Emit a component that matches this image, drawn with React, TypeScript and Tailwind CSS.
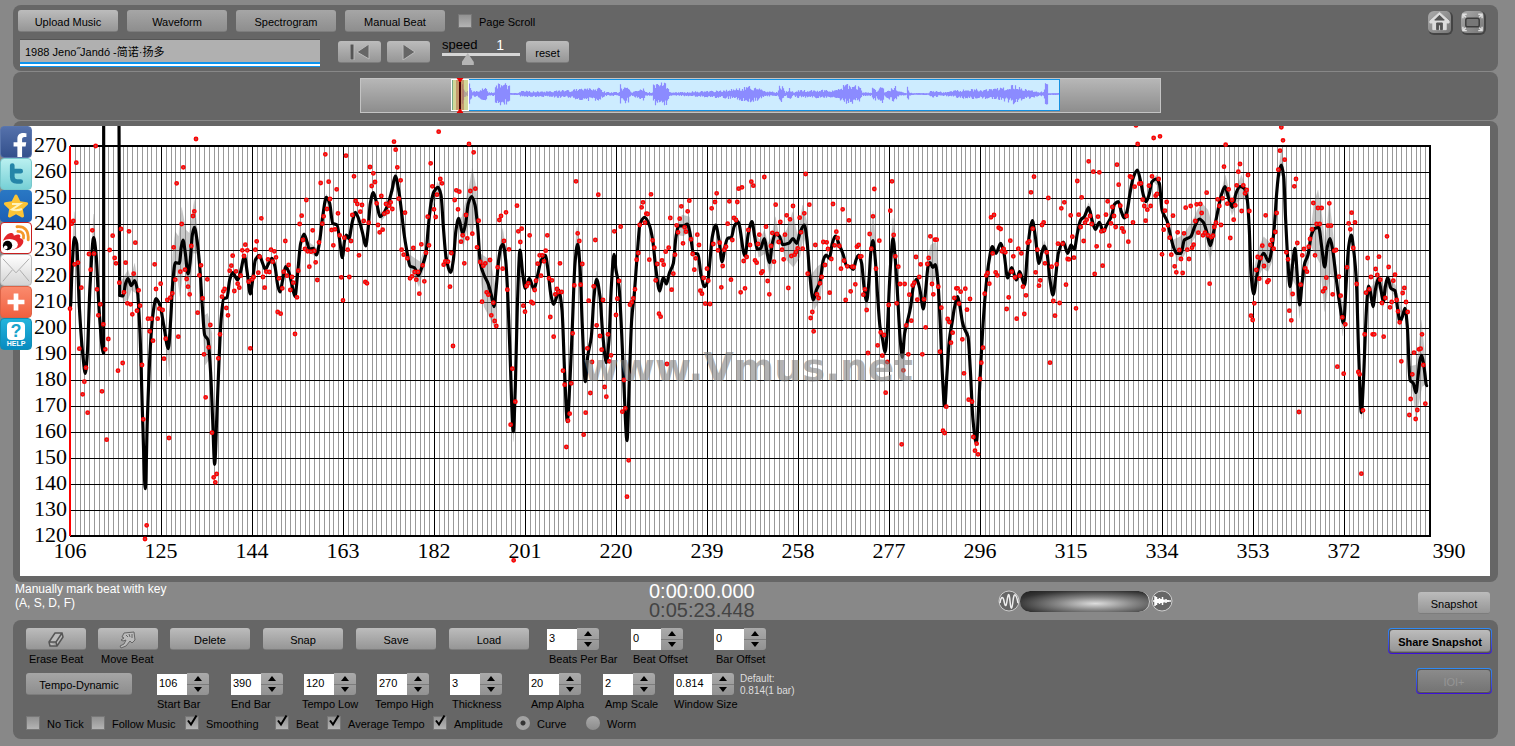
import type { ReactNode } from 'react'
import { FaFacebookF, FaStar } from 'react-icons/fa'
import { clsx } from 'clsx'

type Point = [number, number]

interface Stretch {
  offset: number
  curve: string
  beats: string
}

// Tempo data, stored in thirds of a chart pixel, one stretch per screenful of bars
const STRETCHES: Stretch[] = [
  {
    offset: 120,
    curve:
      '179,526 189,528 197,490 204,476 214,497 224,482 232,510 240,640 248,900 256,1106 262,900 270,700 278,590 288,536 300,556 312,620 325,686 332,600 338,490 346,428 358,430 364,380 369,360 376,400 384,462 390,430 397,345 403,322 411,360 420,450 427,560 434,645 444,660 452,760 458,900 464,1033 470,900 478,700 484,590 491,536 501,533 509,480 518,458 533,480 543,450 553,408 562,460 571,522 578,480 586,420 598,406 608,430 616,448 626,430 636,415 645,440 653,495 660,516 668,480 677,440 686,455 695,490 705,530 712,470 722,370 732,342 741,365 748,388 760,385 769,405 778,370 788,290 799,232 809,250 818,310 831,315 839,360 847,413 854,360 859,345 867,356 876,310 886,277 897,300 908,340 917,378 924,330 931,250 940,218 950,250 960,290 972,278 985,250 996,210 1006,168 1016,210',
    beats:
      '30,566 35,311 40,303 49,128 44,433 54,428 64,503 58,686 78,743 73,785 68,823 83,878 92,449 87,402 102,401 97,331 107,78 111,508 121,553 115,586 130,613 136,688 145,657 126,814 140,959 149,390 158,347 164,414 168,430 183,327 207,334 226,368 197,428 221,461 178,488 192,517 236,511 202,550 212,553 217,583 231,572 240,557 188,729 174,752 246,735 250,898 255,1257 260,1216 264,596 274,596 269,634 279,662 284,433 302,491 288,507 298,566 308,570 293,596 317,656 312,716 327,954 322,540 331,533 337,520 341,382 346,479 350,190 355,650 361,455 365,312 370,142 375,449 380,477 384,500 389,523 394,378 399,288 403,274 408,57 413,578 418,466 423,436 428,535 432,703 437,832 442,478 446,682 451,615 456,938 461,1072 466,1087 470,1062 475,715 480,643 486,530 490,514 494,507 499,564 504,586 509,452 514,437 518,407 523,513 528,454 533,491 538,503 542,467 547,391 552,408 556,374 562,391 566,485 571,685 576,478 581,471 586,389 590,364 595,458 599,410 604,295 609,471 614,503 619,455 624,418 628,456 633,389 638,425 643,394 648,412 653,576 657,475 662,581 667,505 671,455 676,363 681,467 686,435 691,510 696,471 700,488 705,642 711,532 715,452 719,312 725,287 729,360 735,387 739,240 743,394 748,440 753,395 758,331 763,393 767,427 772,480 777,367 782,189 787,311 791,289 796,103 801,267 806,185 810,237 815,330 820,376 825,328 830,208 834,280 839,346 844,472 849,541 853,353 858,107 863,389 868,471 873,363 877,285 882,169 887,243 892,252 897,406 901,275 906,255 911,303 916,486 921,490 926,308 930,141 935,198 940,160 945,186 950,250 954,315 959,337 964,228 968,329 973,281 978,252 983,276 987,257 992,247 997,267 1002,65 1007,89 1012,142 1016,236',
  },
  {
    offset: 1140,
    curve:
      '4,270 12,340 20,390 30,438 44,444 55,466 66,440 78,400 85,320 93,250 102,215 114,202 123,225 130,320 138,410 152,457 160,420 168,330 176,295 188,340 197,310 205,250 215,230 225,255 233,320 241,430 252,465 264,490 274,525 282,560 289,500 296,420 303,380 309,372 317,420 323,520 330,700 340,935 346,800 352,560 360,390 368,460 376,505 388,475 402,508 412,470 424,420 436,406 444,450 452,520 461,553 470,530 476,510 486,570 494,760 502,905 510,780 517,620 525,430 533,372 540,440 547,620 556,785 563,710 574,650 582,530 590,478 600,530 608,640 619,728 627,660 634,500 642,403 648,450 657,500 665,640 672,800 681,962 688,780 695,600 703,520 712,400 720,312 734,292 748,315 758,360 768,450 779,513 790,472 799,492 808,460 820,430 828,350 836,318 850,318 862,312 872,350 880,400 894,402 903,465 914,500 924,480 930,420 937,350 947,315 957,360 966,425 976,375 983,355 994,352 1003,318 1014,305',
    beats:
      '2,181 15,278 5,389 11,404 22,415 30,475 36,469 40,384 44,456 49,479 54,456 58,521 64,373 68,436 73,484 78,398 83,290 87,376 92,130 97,199 102,268 107,291 111,224 116,35 121,177 126,190 131,434 136,424 144,425 150,500 154,399 159,678 164,240 169,211 174,268 178,215 183,365 188,346 193,430 198,285 202,355 207,72 211,213 217,341 221,97 226,206 231,382 236,302 241,426 246,545 250,437 256,430 260,517 265,524 270,420 274,586 280,548 284,603 289,618 293,442 298,300 303,288 308,446 312,363 318,277 322,509 327,388 332,914 337,746 341,1321 346,845 351,257 355,334 361,366 365,326 370,557 375,575 380,498 385,490 389,346 394,546 399,550 404,510 408,482 413,431 419,406 423,467 427,406 432,424 437,392 442,346 447,475 451,591 456,481 461,650 466,523 471,507 475,516 480,430 485,516 489,752 494,794 499,981 504,902 509,881 514,790 518,640 523,496 528,184 533,340 538,363 542,494 547,432 551,944 557,878 562,685 566,542 571,819 576,726 581,499 586,360 590,616 595,224 600,648 605,689 609,540 614,801 619,830 624,643 628,724 633,706 643,334 648,585 652,536 657,483 662,320 667,875 672,780 676,865 681,1130 686,1021 690,554 695,547 700,535 705,508 710,419 715,399 719,315 725,262 729,247 735,308 739,281 743,282 748,419 753,223 758,361 763,383 767,481 772,432 777,581 782,590 786,421 791,434 797,395 801,732 806,383 811,294 815,509 820,461 825,404 830,316 834,337 839,296 844,259 849,370 854,322 858,335 863,274 868,242 873,358 878,402 883,449 887,415 892,344 897,375 901,512 906,521 911,474 916,551 921,446 925,482 930,552 935,265 940,372 945,246 950,220 954,391 959,368 964,502 968,438 973,389 978,380 983,311 988,244 993,479 997,360 1002,294 1008,300 1012,246 1016,206',
  },
  {
    offset: 2160,
    curve:
      '15,408 25,340 36,305 44,350 52,388 62,385 73,356 80,390 88,428 97,370 106,342 118,348 128,374 146,370 159,356 170,370 181,335 193,315 201,360 208,450 220,540 229,510 240,485 250,420 258,405 268,415 277,370 286,348 298,375 310,405 320,438 330,440 340,448 348,420 356,405 365,430 372,500 380,543 387,480 393,390 399,362 406,420 413,530 420,620 428,660 435,697 442,630 448,500 454,400 459,356 466,420 473,530 480,650 487,712 494,640 502,605 512,560 520,500 530,477 540,510 550,567 558,500 564,440 570,428 578,442 586,434 594,490 602,640 608,780 614,860 621,760 628,660 636,610 644,560 653,530 660,560 668,610 676,632 684,650 691,750 699,900 709,970 716,860 722,740 730,600 738,500 746,430 757,380 768,400 782,370 792,400 803,474 815,443 829,480 839,455 854,495 862,400 870,330 877,302 886,350 897,430 905,400 913,378 921,400 930,480 939,525 947,470 955,400 970,366 983,400 993,375 1003,388 1012,340 1022,300',
    beats:
      '2,517 6,202 11,423 15,505 20,411 25,330 30,375 34,185 40,197 45,421 50,428 54,372 58,344 64,459 68,454 73,171 78,320 83,483 88,523 93,378 97,339 102,425 107,254 111,342 116,366 121,306 126,389 131,418 135,344 140,286 145,504 150,298 154,408 159,258 164,404 168,396 173,385 179,293 183,337 188,386 193,280 197,162 203,461 208,254 212,594 217,576 221,634 226,375 231,523 236,534 240,490 245,471 250,366 255,435 260,367 264,387 269,518 274,417 279,252 284,376 289,335 293,354 298,378 303,446 308,268 312,422 317,540 322,439 327,301 332,514 337,440 341,441 346,493 351,380 356,375 360,410 364,409 370,524 375,508 380,570 384,699 389,342 394,386 399,289 403,207 408,446 413,676 418,362 422,637 427,707 432,645 437,818 442,726 446,555 451,272 456,184 461,345 466,409 470,550 475,440 480,492 485,973 490,751 494,492 499,616 505,703 508,524 514,602 518,496 523,488 528,411 532,539 538,471 542,433 547,703 552,538 557,622 562,432 566,414 571,349 576,492 580,523 585,359 590,359 595,500 600,695 604,563 609,932 614,939 619,860 623,597 628,606 633,668 638,638 643,534 649,505 653,505 657,551 662,515 667,658 672,760 676,506 681,569 686,839 690,537 696,845 700,951 705,992 710,971 714,1003 720,777 724,728 729,683 734,521 739,466 743,459 748,491 753,292 758,400 762,285 767,457 772,466 776,323 782,327 786,394 791,387 796,397 800,567 806,532 811,362 815,455 820,409 825,472 830,596 835,386 839,467 844,400 849,500 853,582 858,526 863,368 868,364 873,217 878,326 882,170 887,457 892,389 897,497 901,481 906,315 911,307 915,430 920,397 925,234 930,728 935,440 940,543 945,587 950,433 954,371 959,549 964,265 968,371 973,247 978,494 983,417 987,418 992,286 997,350 1002,413 1008,565 1012,183 1016,284',
  },
  {
    offset: 3180,
    curve:
      '13,290 26,263 36,300 46,328 58,307 70,335 80,315 94,290 104,252 115,245 124,275 133,294 142,270 150,220 160,172 172,150 182,185 190,225 198,245 207,225 216,185 228,177 238,190 246,270 262,305 270,340 280,380 290,400 303,400 313,360 332,350 344,320 358,297 370,307 380,335 391,377 400,340 412,280 424,225 435,200 446,235 457,262 468,220 480,200 493,205 502,240 508,330 513,460 521,522 530,470 540,420 551,400 566,424 575,390 583,320 590,220 597,155 604,135 611,170 617,300 624,430 630,500 637,440 645,385 652,470 659,555 666,490 674,430 684,405 694,345 705,325 716,322 725,380 734,441 742,380 750,356 758,390 768,470 778,545 791,610 798,500 806,380 814,345 821,390 829,480 836,700 844,878 850,790 856,640 861,540 866,498 872,520 879,560 886,510 895,476 903,510 910,545 916,500 923,473 933,505 945,512 952,560 960,605 967,590 975,565 982,620 990,780 1000,790 1008,818 1014,770 1020,720 1025,706 1032,740 1040,797',
    beats:
      '2,321 5,232 11,363 15,308 20,299 26,124 30,288 35,312 40,155 44,462 50,379 54,290 58,157 64,334 68,437 72,331 78,284 83,244 88,377 93,310 97,261 102,288 107,321 111,134 116,194 121,257 126,325 131,335 140,288 145,365 150,169 154,172 159,307 164,200 168,16 173,72 178,191 183,190 188,239 193,258 197,302 202,269 207,197 212,258 216,169 221,54 227,227 231,222 236,177 240,49 246,403 251,329 255,272 260,246 264,316 269,353 274,404 279,287 284,439 289,457 293,337 298,390 303,417 308,459 312,340 317,263 322,389 327,417 332,258 336,383 341,374 346,303 350,253 355,338 361,252 365,279 369,346 375,338 380,218 384,346 389,491 394,351 399,347 403,321 408,308 413,238 418,258 423,315 428,235 432,140 437,74 442,251 446,208 451,354 456,240 461,299 466,256 470,196 475,155 480,132 485,273 490,196 495,220 500,210 504,165 508,273 513,587 518,600 523,550 529,450 533,411 538,476 542,414 547,377 552,438 557,286 562,486 566,481 571,375 576,360 581,386 586,336 590,279 595,149 600,92 604,22 609,61 614,119 619,397 624,418 628,572 634,601 638,522 643,199 648,177 652,369 657,876 662,494 667,406 672,387 676,445 681,455 686,380 690,357 696,328 700,249 705,406 710,312 714,264 719,312 725,264 729,514 735,505 739,473 744,317 748,250 753,317 758,523 763,392 768,390 772,740 777,470 782,527 787,592 791,761 796,613 801,442 806,310 811,328 815,278 820,384 825,307 830,492 835,756 839,763 844,1061 849,871 854,643 858,518 863,414 868,508 873,471 878,643 883,643 887,447 892,465 897,410 901,479 906,549 911,650 916,534 921,349 926,441 930,562 935,546 940,482 945,464 950,540 954,574 959,607 964,724 968,519 973,504 978,546 983,576 988,885 992,837 997,763 1002,698 1007,897 1012,870 1017,688 1022,686 1026,643 1030,735 1036,851',
  },
]

const OPENING = '31,566 36,450 43,353 50,370 58,560 68,700 76,760 82,700 90,500 101,353 108,400 118,580 130,700'

// Loudness bands around the tempo curve
const BANDS: { offset: number; shapes: string[] }[] = [
  {
    offset: 120,
    shapes: [
      '34,440 43,275 52,400 50,430 43,370 36,460',
      '92,440 101,282 110,420 104,400 100,380 94,470',
      '180,490 204,450 212,475 224,430 240,530 228,520 214,510 204,540 190,545',
      '318,650 326,640 334,640 328,770',
      '330,560 338,400 346,335 356,350 365,262 378,330 388,340 403,240 413,340 422,470 410,400 400,400 388,540 372,430 360,530 348,440 342,530 336,500',
      '428,590 443,580 456,640 456,760 446,720 436,735 430,650',
      '736,360 758,375 770,385 770,410 750,400',
      '788,280 799,222 811,250 809,275 799,245 790,300',
      '946,235 965,285 985,250 1006,155 1020,240 1006,190 985,275 965,302',
    ],
  },
  {
    offset: 1140,
    shapes: [
      '24,400 44,415 60,425 80,370 76,430 57,500 42,470 26,440',
      '85,300 112,185 125,210 128,260 113,220 90,290',
      '170,300 186,290 198,240 207,200 217,145 228,200 238,310 236,350 226,290 216,345 206,310 190,380',
      '240,400 262,415 272,425 286,500 292,500 284,625 268,590 252,560 240,450',
      '296,400 308,325 318,390 316,430 308,390 296,440',
      '334,850 346,850 340,965',
      '522,420 531,320 542,400 538,440 532,390',
      '580,520 590,453 602,530 590,500',
      '826,340 846,285 868,290 876,350 862,340 850,348 834,345',
      '770,490 779,480 790,480 779,525',
    ],
  },
  {
    offset: 2160,
    shapes: [
      '44,340 60,360 73,330 84,370 95,350 106,290 118,350 116,370 106,370 90,475 76,400 56,412',
      '124,350 140,330 158,275 172,345 188,255 204,320 206,400 190,350 180,410 160,442 140,420 128,390',
      '210,470 232,440 246,430 254,420 240,540 222,570 214,510',
      '390,380 399,272 408,380 399,400',
      '452,380 459,295 467,380 459,400',
      '372,510 380,500 388,510 380,575',
      '560,430 572,375 588,365 598,470 586,470 576,505 566,450',
      '905,395 913,362 922,390 913,400',
      '668,600 676,610 688,640 680,650 668,620',
    ],
  },
  {
    offset: 3180,
    shapes: [
      '14,280 26,248 38,285 26,275',
      '278,360 300,350 320,330 344,290 352,270 366,250 384,270 398,320 404,350 390,425 378,350 360,330 330,375 310,410 290,425',
      '424,215 436,165 448,215 458,250 470,205 484,165 500,210 498,240 484,235 470,250 456,285 440,230',
      '216,180 230,165 240,190 230,195',
      '516,480 534,390 551,350 572,370 584,330 578,420 564,455 548,445 530,480 520,530',
      '592,180 604,85 616,180 604,165',
      '622,440 630,430 638,440 650,440 660,500 672,420 690,370 686,430 668,500 659,595 650,500 638,480 630,540',
      '688,370 702,250 714,210 724,270 736,380 748,240 758,330 770,450 764,480 750,460 734,575 720,430 704,400',
      '774,500 791,560 800,520 788,648',
      '836,800 852,800 845,897',
      '860,500 876,500 895,460 910,500 924,465 946,495 966,575 960,625 946,530 924,500 910,560 896,500 880,570',
      '984,740 1008,735 1016,690 1024,600 1034,700 1042,790 1026,800 1008,895 996,800',
    ],
  },
]

// Overview loudness: position in the strip, half height
const ENVELOPE: Point[] = [
  [102, 11], [105, 3], [108, 3], [109, 10], [112, 3], [116, 3], [123, 7], [126, 6], [128, 2], [134, 2], [135, 10], [142, 11],
  [149, 10], [150, 1], [158, 1], [160, 3], [174, 3], [192, 3], [197, 4], [210, 4], [220, 6], [231, 7], [240, 6],
  [245, 2], [259, 2], [260, 12], [262, 6], [265, 9], [268, 8], [271, 2], [277, 4], [283, 7], [285, 2], [292, 2],
  [293, 11], [307, 11], [309, 2], [321, 2], [339, 3], [357, 4], [371, 5], [383, 7], [390, 8], [399, 6], [403, 3],
  [417, 2], [420, 11], [423, 6], [425, 2], [429, 6], [433, 2], [438, 4], [467, 4], [477, 4], [481, 8], [490, 11],
  [500, 7], [502, 2], [511, 2], [513, 11], [516, 4], [522, 9], [524, 3], [535, 8], [537, 3], [546, 1], [547, 9],
  [549, 2], [552, 1], [568, 1], [571, 4], [582, 2], [591, 3], [605, 5], [633, 5], [647, 8], [653, 10], [665, 6],
  [679, 2], [683, 3], [685, 12], [687, 11], [688, 1], [699, 1],
]

const parse = (data: string, offset: number): Point[] =>
  data.split(' ').map((pair) => {
    const [x, y] = pair.split(',').map(Number)
    return [x + offset, y]
  })

// Monotone cubic, so the line never overshoots a peak
function smooth(points: Point[]) {
  const slope = (i: number) => (points[i + 1][1] - points[i][1]) / (points[i + 1][0] - points[i][0])
  const tangents = points.map((_, i) => {
    if (i === 0 || i === points.length - 1) return 0
    const a = slope(i - 1)
    const b = slope(i)
    return a * b <= 0 ? 0 : (2 * a * b) / (a + b)
  })
  return points.reduce((d, [x, y], i) => {
    if (i === 0) return `M${x} ${y}`
    const [px, py] = points[i - 1]
    const h = (x - px) / 3
    return `${d}C${px + h} ${py + tangents[i - 1] * h} ${x - h} ${y - tangents[i] * h} ${x} ${y}`
  }, '')
}

const noise = (seed: number) => {
  const n = Math.sin(seed * 91.7) * 43758.5
  return n - Math.floor(n)
}

function wavePath() {
  let d = ''
  for (let i = 0; i < ENVELOPE.length - 1; i++) {
    const [x1, a1] = ENVELOPE[i]
    const [x2, a2] = ENVELOPE[i + 1]
    for (let x = x1; x < x2; x++) {
      const amp = a1 + ((a2 - a1) * (x - x1)) / (x2 - x1)
      const up = amp * (0.45 + 0.6 * noise(x))
      const down = amp * (0.45 + 0.6 * noise(x + 900))
      d += `M${x + 0.5} ${16 - up}V${16 + down}`
    }
  }
  return d
}

const BAR_WIDTH = 1360 / 284
const tempoLabels = Array.from({ length: 16 }, (_, i) => 270 - i * 10)
const barLabels = Array.from({ length: 15 }, (_, i) => 106 + i * 19)
const curve = smooth(STRETCHES.flatMap((s) => parse(s.curve, s.offset)))
const beats = STRETCHES.flatMap((s) => parse(s.beats, s.offset))

function TempoChart() {
  return (
    <svg viewBox="0 0 1470 450" className="block w-full bg-white font-['Liberation_Serif',serif]" role="img" aria-label="Tempo curve">
      {Array.from({ length: 284 }, (_, i) => {
        const x = Math.round(50 + i * BAR_WIDTH) + 0.5
        return <path key={i} d={`M${x} 20V410`} stroke="#999" strokeWidth="1" />
      })}
      {tempoLabels.map((tempo, i) => (
        <g key={tempo}>
          <path d={`M50 ${20.5 + i * 26}H1410`} stroke="#000" strokeWidth="1" />
          <text x="47" y={26 + i * 26} fontSize="22" textAnchor="end">
            {tempo}
          </text>
        </g>
      ))}
      {barLabels.map((bar, i) => (
        <g key={bar}>
          <path d={`M${Math.round(50 + i * 91) + 0.5} 20V410`} stroke="#000" strokeWidth="1" />
          <text x={50 + i * 91} y="432" fontSize="22" textAnchor="middle">
            {bar}
          </text>
        </g>
      ))}
      <text x="1429" y="432" fontSize="22" textAnchor="middle">
        390
      </text>
      <path d="M50 20H1410V410H50" fill="none" stroke="#000" strokeWidth="2" />
      <path d="M50 20V410" stroke="#f00" strokeWidth="2" />

      <g transform="scale(0.333333) translate(0 -18)">
        {BANDS.map((band) => (
          <g key={band.offset} transform={`translate(${band.offset} 0)`} fill="#777" fillOpacity="0.4" stroke="#777" strokeOpacity="0.3">
            {band.shapes.map((shape) => (
              <polygon key={shape} points={shape} />
            ))}
          </g>
        ))}
        <g fill="none" stroke="#000" strokeWidth="9.5" strokeLinecap="round" strokeLinejoin="round">
          <path d={smooth(parse(OPENING, 120))} />
          <path d="M251 700V0M297 0L299 526" />
          <path d={curve} />
        </g>
        <g fill="#b55" stroke="#f00" strokeWidth="4.5">
          {beats.map(([x, y], i) => (
            <circle key={i} cx={x} cy={y} r="5" />
          ))}
        </g>
      </g>
      <text x="563" y="255" fontSize="39" fontWeight="bold" fill="#808080" fillOpacity="0.6" fontFamily="DejaVu Sans, sans-serif">
        www.Vmus.net
      </text>
    </svg>
  )
}

interface ButtonProps {
  children: ReactNode
  className?: string
  label?: string
  tone?: 'light' | 'mid' | 'off'
}

function Button({ children, className, label, tone = 'light' }: ButtonProps) {
  return (
    <button
      type="button"
      aria-label={label}
      disabled={tone === 'off'}
      className={clsx(
        'flex h-[22px] shrink-0 items-center justify-center rounded-[3px] border-b border-[#7d7d7d] bg-linear-to-b pt-0.5',
        tone === 'light' && 'from-[#bcbcbc] to-[#969696]',
        tone === 'mid' && 'from-[#a6a6a6] to-[#8e8e8e]',
        tone === 'off' && 'from-[#8b8b8b] to-[#757575] text-[#959595]',
        className,
      )}
    >
      {children}
    </button>
  )
}

function Tick({ label, checked, className }: { label: string; checked?: boolean; className?: string }) {
  return (
    <label className={clsx('relative flex shrink-0 items-center gap-[7px]', className)}>
      <input
        type="checkbox"
        defaultChecked={checked}
        className="peer size-3.5 appearance-none border border-[#777] bg-linear-to-b from-[#929292] to-[#b4b4b4]"
      />
      <svg viewBox="0 0 14 14" className="pointer-events-none absolute bottom-1 left-0 hidden size-3.5 peer-checked:block">
        <path d="M3 7.5L6 11.5L11.5 2.5" fill="none" stroke="#000" strokeWidth="2" />
      </svg>
      <span className="pt-0.5">{label}</span>
    </label>
  )
}

function Radio({ label, checked, className }: { label: string; checked?: boolean; className?: string }) {
  return (
    <label className={clsx('flex shrink-0 items-center gap-[7px]', className)}>
      <input
        type="radio"
        name="view"
        defaultChecked={checked}
        className="size-3.5 appearance-none rounded-full bg-linear-to-b from-[#aaa] to-[#8c8c8c] checked:bg-[radial-gradient(circle,#333_2px,#a2a2a2_3px)]"
      />
      <span className="pt-0.5">{label}</span>
    </label>
  )
}

interface StepperProps {
  label: string
  value: string
  className: string
  shift?: string
  wide?: boolean
}

function Stepper({ label, value, className, shift = 'ml-0.5', wide }: StepperProps) {
  const id = label.toLowerCase().replace(/ /g, '-')
  return (
    <div className={clsx('flex shrink-0 flex-col gap-0.5 whitespace-nowrap', className)}>
      <div className="flex">
        <input id={id} defaultValue={value} className={clsx('mt-px h-[21px] bg-white px-0.5 pb-1', wide ? 'w-[38px]' : 'w-[30px]')} />
        <div className="flex h-[22px] w-[22px] flex-col divide-y divide-[#7c7c7c] overflow-hidden rounded-r-[3px] bg-linear-to-b from-[#aaa] to-[#929292]">
          {['M0 5L4 0L8 5Z', 'M0 0L4 5L8 0Z'].map((d, i) => (
            <button key={d} type="button" aria-label={`${label} ${i ? 'down' : 'up'}`} className="flex flex-1 items-center justify-center">
              <svg viewBox="0 0 8 5" className="h-[5px] w-2">
                <path d={d} />
              </svg>
            </button>
          ))}
        </div>
      </div>
      <label htmlFor={id} className={shift}>
        {label}
      </label>
    </div>
  )
}

function Panel({ children, className }: { children: ReactNode; className?: string }) {
  return <section className={clsx('rounded-lg bg-[#666]', className)}>{children}</section>
}

const socialClass = 'flex size-8 items-center justify-center overflow-hidden rounded'

function SocialBar() {
  return (
    <nav className="absolute top-[5px] -left-[13px] flex flex-col" aria-label="Share">
      <a href="#facebook" aria-label="Facebook" className={clsx(socialClass, 'border border-[#5a76ad] bg-linear-to-b from-[#5571ab] to-[#33508c]')}>
        <FaFacebookF className="mt-1.5 ml-2 size-6 text-white" />
      </a>
      <a href="#twitter" aria-label="Twitter" className={clsx(socialClass, 'border border-[#78c8cc] bg-linear-to-b from-[#b9f0f0] to-[#76d0d6]')}>
        <svg viewBox="0 0 32 32" className="size-8">
          <path d="M12 7V19Q12 24 17 24H21M12 13H21" fill="none" stroke="#2585a8" strokeWidth="5" strokeLinecap="round" strokeLinejoin="round" />
        </svg>
      </a>
      <a href="#qzone" aria-label="Qzone" className={clsx(socialClass, 'relative bg-linear-to-b from-[#2a78c4] to-[#1c5fb4]')}>
        <FaStar className="size-[26px] text-[#fcc436]" />
        <svg viewBox="0 0 32 32" className="absolute size-8">
          <path d="M12 14H20L12 19.5Q17 21 22 19" fill="none" stroke="#fff3bd" strokeWidth="2" />
        </svg>
      </a>
      <a href="#weibo" aria-label="Weibo" className={clsx(socialClass, 'border border-[#c81e1e] bg-white')}>
        <svg viewBox="0 0 32 32" className="size-8">
          <path d="M2 20C3 14 9 9 12 11C15 12 12 14 15 13C19 11 22 13 20 16C25 17 25 21 21 25C15 30 2 30 1 24Z" fill="#e32529" />
          <ellipse cx="9" cy="23" rx="9" ry="6" fill="#fff" />
          <ellipse cx="7" cy="24" rx="5" ry="5" />
          <circle cx="5" cy="26" r="2" fill="#fff" />
          <path d="M18 9Q25 9 24 16M17 4Q30 3 29 18" fill="none" stroke="#f4982c" strokeWidth="3" strokeLinecap="round" />
        </svg>
      </a>
      <a href="#mail" aria-label="Mail" className={clsx(socialClass, 'border border-[#bbb] bg-linear-to-b from-white to-[#d4d4d4]')}>
        <svg viewBox="0 0 32 32" className="size-8">
          <path d="M2 4L16 19L30 4M2 28L12 16M30 28L20 16" fill="none" stroke="#aaa" strokeWidth="1" />
        </svg>
      </a>
      <a href="#more" aria-label="More" className={clsx(socialClass, 'border border-[#dc6346] bg-linear-to-b from-[#fa8a6d] to-[#f0603f]')}>
        <svg viewBox="0 0 32 32" className="size-8">
          <path d="M16 7V25M7 16H25" stroke="#fff" strokeWidth="5" />
        </svg>
      </a>
      <a
        href="#help"
        className={clsx(socialClass, 'flex-col border border-[#0f8fb4] bg-linear-to-b from-[#22b4dc] to-[#078bc0] text-[7px] leading-[8px] font-bold text-white')}
      >
        <span className="mt-0.5 flex h-[18px] w-[18px] items-center justify-center rounded bg-white text-[18px] leading-[18px] text-[#18a4cc]">?</span>
        HELP
      </a>
    </nav>
  )
}

function Toolbar() {
  return (
    <Panel className="flex justify-between pt-[5px] pr-3 pb-1 pl-[5px]">
      <div>
        <div className="flex gap-[9px]">
          <Button className="w-[100px]">Upload Music</Button>
          <Button className="w-[100px]" tone="mid">Waveform</Button>
          <Button className="w-[100px]" tone="mid">Spectrogram</Button>
          <Button className="w-[100px]" tone="mid">Manual Beat</Button>
          <Tick label="Page Scroll" className="ml-1" />
        </div>
        <div className="mt-[7px] ml-0.5 flex">
          <input
            aria-label="Title"
            defaultValue="1988 Jeno˝Jandó -简诺·扬多"
            className="h-[28px] w-[300px] border-t border-b border-t-[#555] border-b-[#0d94ee] bg-[#b0b0b0] px-[5px] pb-1 shadow-[inset_0_-2px_0_#fff,inset_0_-4px_0_#0d94ee]"
          />
          <div className="mt-0.5 ml-[18px] flex gap-1.5">
            <Button className="w-[43px]" label="Back to start">
              <svg viewBox="0 0 20 16" className="mb-0.5 h-4 w-5" stroke="#bbb" strokeWidth="1">
                <path d="M0 0H4V16H0Z" fill="#555" />
                <path d="M19 0V15L7 8Z" fill="#666" />
              </svg>
            </Button>
            <Button className="w-[43px]" label="Play">
              <svg viewBox="0 0 14 16" className="mb-0.5 h-4 w-3.5" stroke="#bbb" strokeWidth="1">
                <path d="M1 0V16L13 8Z" fill="#666" />
              </svg>
            </Button>
          </div>
          <div className="ml-3 w-[78px]">
            <div className="-mt-0.5 flex justify-between pr-4 text-[13px] leading-[16px]">
              <label htmlFor="speed">speed</label>
              <output className="text-[14px] text-white">1</output>
            </div>
            <input
              id="speed"
              type="range"
              defaultValue="30"
              className="block h-3 w-full appearance-none bg-linear-to-b from-[#d6d6d6] from-[3px] to-transparent to-[3px] [&::-webkit-slider-thumb]:h-3 [&::-webkit-slider-thumb]:w-3 [&::-webkit-slider-thumb]:appearance-none [&::-webkit-slider-thumb]:bg-[#b5b5b5] [&::-webkit-slider-thumb]:[clip-path:polygon(50%_0,100%_75%,100%_100%,0_100%,0_75%)]"
            />
          </div>
          <Button className="mt-0.5 ml-1.5 w-[43px]">reset</Button>
        </div>
      </div>
      <div className="flex gap-2 pt-px">
        <button type="button" aria-label="Home" className="h-[24px] w-[25px] rounded-md border-r-2 border-b-2 border-[#444] bg-linear-to-br from-[#aaa] to-[#777]">
          <svg viewBox="0 0 24 22" className="h-[22px] w-[23px]">
            <path d="M12 1L2 10V12H5V19H19V12H22V10Z" fill="#ddd" stroke="#ddd" strokeLinejoin="round" />
            <path d="M12 4L7 9H17ZM9 19V12H15V19H13V14H11V19Z" fill="#555" stroke="#555" />
          </svg>
        </button>
        <button type="button" aria-label="Full screen" className="h-[24px] w-[25px] rounded-md border-r-2 border-b-2 border-[#444] bg-linear-to-br from-[#aaa] to-[#777]">
          <svg viewBox="0 0 24 22" className="h-[22px] w-[23px]" fill="none">
            <rect x="5" y="7" width="14" height="9" rx="2" fill="#777" stroke="#3c3c3c" strokeWidth="1.5" />
            <path d="M2 7V3H6M2 3L5 6M18 3H22V7M22 3L19 6M2 16V20H6M2 20L5 17M22 16V20H18M22 20L19 17" stroke="#e0e0e0" strokeWidth="1.5" />
          </svg>
        </button>
      </div>
    </Panel>
  )
}

function Overview() {
  return (
    <Panel className="flex justify-center pt-1.5 pb-[7px] pl-2.5">
      <svg viewBox="0 0 801 35" className="w-[55%] max-w-[801px] shrink-0 bg-linear-to-b from-[#b8b8b8] to-[#8c8c8c]" role="img" aria-label="Overview">
        <rect x="0.5" y="0.5" width="800" height="34" fill="none" stroke="#c4c4c4" />
        <rect x="92.5" y="1.5" width="607" height="31" fill="#cdecff" stroke="#1490e0" />
        <path d={wavePath()} stroke="#8b8bff" strokeWidth="1.2" />
        <path d="M102 16H699" stroke="#8b8bff" />
        <rect x="91.5" y="1.5" width="17" height="31" fill="#d8c030" fillOpacity="0.5" stroke="#fff" />
        <rect x="96" y="2" width="8" height="30" fill="#b04030" fillOpacity="0.4" />
        <path d="M100 0V34" stroke="#400" strokeWidth="2" />
        <path d="M97 0H103L100 4ZM97 35H103L100 31Z" fill="#e00" stroke="#e00" />
      </svg>
    </Panel>
  )
}

function StatusRow() {
  return (
    <div className="grid h-[38px] grid-cols-[634fr_349fr_420fr_80px] pl-0.5">
      <p className="text-[12px] leading-[14px] text-white">
        Manually mark beat with key
        <br />
        (A, S, D, F)
      </p>
      <div className="text-[20px] leading-[19px]">
        <div className="text-white">0:00:00.000</div>
        <div className="text-[#444]">0:05:23.448</div>
      </div>
      <div className="flex items-center">
        <svg viewBox="0 0 22 22" className="size-[22px]" fill="none" stroke="#eee">
          <circle cx="11" cy="11" r="10" fill="#666" stroke="#ccc" />
          <path d="M2 13C3 6 5 6 6 11S8 18 9 11S11 1 12 11S14 20 15 11S18 3 20 13" strokeWidth="1.5" />
        </svg>
        <input
          type="range"
          aria-label="Zoom"
          className="h-[21px] w-[130px] appearance-none rounded-full bg-[radial-gradient(ellipse_at_58%_60%,#ddd_0%,#888_35%,#333_75%,#1c1c1c_100%)] shadow-[inset_-1px_0_0_#ccc] [&::-webkit-slider-thumb]:appearance-none"
        />
        <svg viewBox="0 0 22 22" className="ml-px size-[22px]" fill="none" stroke="#fff">
          <circle cx="11" cy="11" r="10" fill="#666" stroke="#ccc" />
          <path d="M2 11H20M4 6V16M5.500 7V15M7 9V13M8.500 8V14M10 9V13M11.500 7V15M13 9.500V12.500M15 9V13M17 10V12" strokeWidth="1.5" />
        </svg>
      </div>
      <div className="pt-[10px]">
        <Button className="w-[72px]">Snapshot</Button>
      </div>
    </div>
  )
}

function Framed({ children }: { children: ReactNode }) {
  return (
    <div className="rounded bg-linear-to-b from-[#2f8cf5] to-[#3c08d8] p-px">
      <div className="rounded-[3px] bg-[#555] p-px">{children}</div>
    </div>
  )
}

function Controls() {
  return (
    <Panel className="flex justify-between pt-2 pr-1.5 pb-2 pl-[13px]">
      <div>
        <div className="flex h-[45px]">
          <div className="flex w-[72px] flex-col gap-0.5">
            <Button className="w-[60px]" label="Erase Beat">
              <svg viewBox="0 0 18 16" className="h-4 w-[18px]" fill="#bbb" stroke="#555" strokeWidth="1.5" strokeLinejoin="round">
                <path d="M8 1H15L9 10H2ZM15 1L16 5L10 14L9 10M10 14H3L2 10" />
              </svg>
            </Button>
            <span className="ml-[3px]">Erase Beat</span>
          </div>
          <div className="flex w-[72px] flex-col gap-0.5">
            <Button className="w-[60px]" label="Move Beat">
              <svg viewBox="0 0 18 18" className="h-[18px] w-[18px]" fill="#bbb" stroke="#666" strokeLinejoin="round">
                <path d="M5 2L15 1L16 9L13 12L11 10L7 15L2 17L1 15L5 13L7 9L4 10L2 9L5 7L3 6Z" />
                <path d="M7 4L9 6M10 3L11 6M13 3V7" />
              </svg>
            </Button>
            <span className="ml-[3px]">Move Beat</span>
          </div>
          <div className="mr-[18px] flex gap-[13px]">
            <Button className="w-20">Delete</Button>
            <Button className="w-20">Snap</Button>
            <Button className="w-20">Save</Button>
            <Button className="w-20">Load</Button>
          </div>
          <Stepper label="Beats Per Bar" value="3" className="w-[84px]" />
          <Stepper label="Beat Offset" value="0" className="w-[83px]" />
          <Stepper label="Bar Offset" value="0" className="w-[74px]" />
        </div>
        <div className="flex h-[42px]">
          <div className="w-[131px]">
            <Button className="w-[106px]" tone="mid">Tempo-Dynamic</Button>
          </div>
          <Stepper label="Start Bar" value="106" className="w-[74px]" shift="ml-0" />
          <Stepper label="End Bar" value="390" className="w-[73px]" shift="ml-0" />
          <Stepper label="Tempo Low" value="120" className="w-[73px]" shift="-ml-0.5" />
          <Stepper label="Tempo High" value="270" className="w-[73px]" shift="-ml-0.5" />
          <Stepper label="Thickness" value="3" className="w-[79px]" />
          <Stepper label="Amp Alpha" value="20" className="w-[74px]" />
          <Stepper label="Amp Scale" value="2" className="w-[71px]" />
          <Stepper label="Window Size" value="0.814" className="w-[66px]" shift="ml-0" wide />
          <p className="text-[10px] leading-[12px] text-[#ddd]">
            Default:
            <br />
            0.814(1 bar)
          </p>
        </div>
        <div className="flex">
          <Tick label="No Tick" className="w-[65px]" />
          <Tick label="Follow Music" className="w-[94px]" />
          <Tick label="Smoothing" checked className="w-[90px]" />
          <Tick label="Beat" checked className="w-[52px]" />
          <Tick label="Average Tempo" checked className="w-[106px]" />
          <Tick label="Amplitude" checked className="w-[83px]" />
          <Radio label="Curve" checked className="w-[70px]" />
          <Radio label="Worm" />
        </div>
      </div>
      <div className="flex flex-col items-end gap-3.5">
        <Framed>
          <Button className="w-[100px] font-bold">Share Snapshot</Button>
        </Framed>
        <Framed>
          <Button className="w-[72px]" tone="off">IOI+</Button>
        </Framed>
      </div>
    </Panel>
  )
}

export default function App() {
  return (
    <div className="min-h-screen bg-[#888] pt-[5px] pr-[17px] pb-2 pl-[13px] font-['Liberation_Sans','Noto_Sans_CJK_SC',sans-serif] text-[11px] leading-[14px] text-black">
      <div className="flex flex-col gap-px">
        <Toolbar />
        <Overview />
        <Panel className="relative pt-[5px] pr-2 pb-1.5 pl-[7px]">
          <TempoChart />
          <SocialBar />
        </Panel>
      </div>
      <StatusRow />
      <Controls />
    </div>
  )
}
